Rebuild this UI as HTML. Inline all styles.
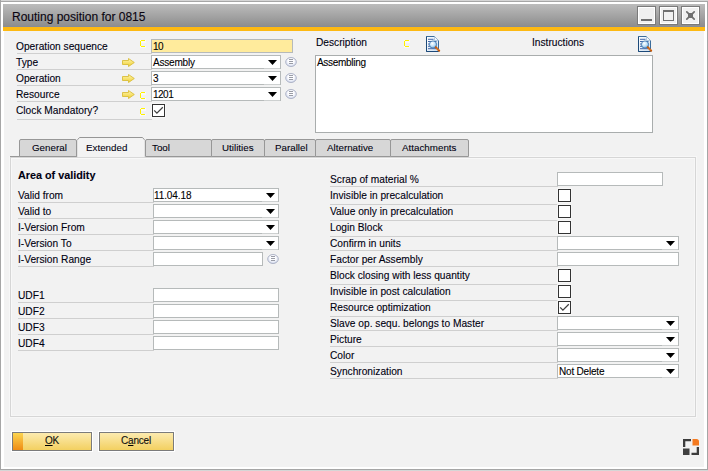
<!DOCTYPE html><html><head><meta charset="utf-8"><style>
html,body{margin:0;padding:0;width:708px;height:471px;overflow:hidden;background:#d6d6d6}
body{position:relative;font-family:"Liberation Sans",sans-serif}
div{position:absolute;box-sizing:content-box}
.lb{font-size:10.2px;line-height:12px;color:#000010;white-space:nowrap;-webkit-text-stroke:0.1px #000010}
.tv{font-size:10px;line-height:12px;letter-spacing:-0.2px;color:#000;white-space:nowrap;-webkit-text-stroke:0.1px #000}
.tb{font-size:9.8px;line-height:12px;color:#000010;white-space:nowrap;-webkit-text-stroke:0.08px #000010}
.in{border:1px solid #b6baba}
</style></head><body>
<div style="position:absolute;left:0px;top:0px;width:1px;height:470px;background:#a6a6a6"></div>
<div style="position:absolute;left:0px;top:1px;width:708px;height:469px;background:#a6a6a6"></div>
<div style="position:absolute;left:1px;top:2px;width:706px;height:467px;background:#ffffff"></div>
<div style="position:absolute;left:4px;top:31px;width:700px;height:436px;background:#f2f2f2"></div>
<div style="position:absolute;left:3px;top:4px;width:702px;height:22px;background:linear-gradient(#bcbcbc,#8e8e8e)"></div>
<div style="position:absolute;left:3px;top:26px;width:702px;height:1px;background:#878c97"></div>
<div style="position:absolute;left:3px;top:27px;width:702px;height:4px;background:#fdb913"></div>
<div style="left:12px;top:10px;font-size:12px;line-height:14px;color:#0a0410;white-space:nowrap;-webkit-text-stroke:0.12px #0a0410">Routing position for 0815</div>
<div style="position:absolute;left:637px;top:6px;width:17px;height:17px;border:1px solid #7a7a7a;background:#f0f0f0;box-shadow:inset 0 0 0 1px #fff"></div>
<div style="position:absolute;left:659px;top:6px;width:17px;height:17px;border:1px solid #7a7a7a;background:#f0f0f0;box-shadow:inset 0 0 0 1px #fff"></div>
<div style="position:absolute;left:681px;top:6px;width:17px;height:17px;border:1px solid #7a7a7a;background:#f0f0f0;box-shadow:inset 0 0 0 1px #fff"></div>
<div style="position:absolute;left:641px;top:19px;width:11px;height:2px;background:#6f6f6f"></div>
<div style="position:absolute;left:663px;top:10px;width:9px;height:8px;border:1px solid #6f6f6f;border-top-width:2px"></div>
<svg style="position:absolute;left:685px;top:10px" width="11" height="11" viewBox="0 0 11 11"><path d="M1.8 1.8L9.2 9.2M9.2 1.8L1.8 9.2" stroke="#6f6f6f" stroke-width="1.7" stroke-linecap="round"/><rect x="3" y="3" width="5" height="5" fill="#6f6f6f"/></svg>
<div class="lb" style="left:16px;top:41px;">Operation sequence</div>
<div class="lb" style="left:16px;top:57px;">Type</div>
<div class="lb" style="left:16px;top:73px;">Operation</div>
<div class="lb" style="left:16px;top:89px;">Resource</div>
<div class="lb" style="left:16px;top:105px;">Clock Mandatory?</div>
<div style="position:absolute;left:17px;top:53px;width:135px;height:1px;background:#cfcfcf"></div>
<div style="position:absolute;left:17px;top:69px;width:135px;height:1px;background:#cfcfcf"></div>
<div style="position:absolute;left:17px;top:85px;width:135px;height:1px;background:#cfcfcf"></div>
<div style="position:absolute;left:17px;top:101px;width:135px;height:1px;background:#cfcfcf"></div>
<div style="position:absolute;left:17px;top:119px;width:135px;height:1px;background:#cfcfcf"></div>
<svg style="position:absolute;left:139px;top:39px" width="7" height="9" shape-rendering="crispEdges"><path d="M1 1h6v3h-5v3h5v2h-6z" fill="#ffffff" opacity="0.5"/><rect x="2" y="1" width="4" height="1" fill="#fff200"/><rect x="1" y="2" width="1" height="5" fill="#fff200"/><rect x="2" y="7" width="4" height="1" fill="#fff200"/></svg>
<div class="in" style="left:151px;top:39px;width:140px;height:12px;background:#ffeb9c"></div>
<div class="tv" style="left:153px;top:41px;letter-spacing:-0.5px;">10</div>
<svg style="position:absolute;left:122px;top:58px" width="13" height="9" viewBox="0 0 13 9"><defs><linearGradient id="ag12258" x1="0" y1="0" x2="0" y2="1"><stop offset="0" stop-color="#fff6b0"/><stop offset="1" stop-color="#f0cf30"/></linearGradient></defs><path d="M0.5 2.5H6.5V0.5L12.3 4.5L6.5 8.5V6.5H0.5Z" fill="url(#ag12258)" stroke="#d9bd3a" stroke-width="0.9"/></svg>
<div class="in" style="left:151px;top:55px;width:128px;height:12px;background:#fff"></div>
<div style="position:absolute;left:264px;top:68px;width:16px;height:1px;background:#cdd0d0"></div>
<svg style="position:absolute;left:268px;top:60px" width="9" height="5"><path d="M0 0H9L4.5 5Z" fill="#000"/></svg>
<div class="tv" style="left:153px;top:57px;">Assembly</div>
<svg style="position:absolute;left:285px;top:57px" width="13" height="11" viewBox="0 0 13 11"><defs><radialGradient id="lg28557" cx="0.5" cy="0.4" r="0.6"><stop offset="0.45" stop-color="#fdfdff"/><stop offset="1" stop-color="#cdd5ea"/></radialGradient></defs><ellipse cx="6" cy="5" rx="5.3" ry="4.5" fill="url(#lg28557)" stroke="#a8aec2" stroke-width="0.9"/><path d="M4 2.5H8M4 4.5H8M4 6.5H8" stroke="#868a96" stroke-width="0.85"/></svg>
<svg style="position:absolute;left:122px;top:74px" width="13" height="9" viewBox="0 0 13 9"><defs><linearGradient id="ag12274" x1="0" y1="0" x2="0" y2="1"><stop offset="0" stop-color="#fff6b0"/><stop offset="1" stop-color="#f0cf30"/></linearGradient></defs><path d="M0.5 2.5H6.5V0.5L12.3 4.5L6.5 8.5V6.5H0.5Z" fill="url(#ag12274)" stroke="#d9bd3a" stroke-width="0.9"/></svg>
<div class="in" style="left:151px;top:71px;width:128px;height:12px;background:#fff"></div>
<div style="position:absolute;left:264px;top:84px;width:16px;height:1px;background:#cdd0d0"></div>
<svg style="position:absolute;left:268px;top:76px" width="9" height="5"><path d="M0 0H9L4.5 5Z" fill="#000"/></svg>
<div class="tv" style="left:153px;top:73px;letter-spacing:-0.5px;">3</div>
<svg style="position:absolute;left:285px;top:73px" width="13" height="11" viewBox="0 0 13 11"><defs><radialGradient id="lg28573" cx="0.5" cy="0.4" r="0.6"><stop offset="0.45" stop-color="#fdfdff"/><stop offset="1" stop-color="#cdd5ea"/></radialGradient></defs><ellipse cx="6" cy="5" rx="5.3" ry="4.5" fill="url(#lg28573)" stroke="#a8aec2" stroke-width="0.9"/><path d="M4 2.5H8M4 4.5H8M4 6.5H8" stroke="#868a96" stroke-width="0.85"/></svg>
<svg style="position:absolute;left:122px;top:90px" width="13" height="9" viewBox="0 0 13 9"><defs><linearGradient id="ag12290" x1="0" y1="0" x2="0" y2="1"><stop offset="0" stop-color="#fff6b0"/><stop offset="1" stop-color="#f0cf30"/></linearGradient></defs><path d="M0.5 2.5H6.5V0.5L12.3 4.5L6.5 8.5V6.5H0.5Z" fill="url(#ag12290)" stroke="#d9bd3a" stroke-width="0.9"/></svg>
<svg style="position:absolute;left:139px;top:91px" width="7" height="9" shape-rendering="crispEdges"><path d="M1 1h6v3h-5v3h5v2h-6z" fill="#ffffff" opacity="0.5"/><rect x="2" y="1" width="4" height="1" fill="#fff200"/><rect x="1" y="2" width="1" height="5" fill="#fff200"/><rect x="2" y="7" width="4" height="1" fill="#fff200"/></svg>
<div class="in" style="left:151px;top:87px;width:128px;height:12px;background:#fff"></div>
<div style="position:absolute;left:264px;top:100px;width:16px;height:1px;background:#cdd0d0"></div>
<svg style="position:absolute;left:268px;top:92px" width="9" height="5"><path d="M0 0H9L4.5 5Z" fill="#000"/></svg>
<div class="tv" style="left:153px;top:89px;letter-spacing:-0.5px;">1201</div>
<svg style="position:absolute;left:285px;top:89px" width="13" height="11" viewBox="0 0 13 11"><defs><radialGradient id="lg28589" cx="0.5" cy="0.4" r="0.6"><stop offset="0.45" stop-color="#fdfdff"/><stop offset="1" stop-color="#cdd5ea"/></radialGradient></defs><ellipse cx="6" cy="5" rx="5.3" ry="4.5" fill="url(#lg28589)" stroke="#a8aec2" stroke-width="0.9"/><path d="M4 2.5H8M4 4.5H8M4 6.5H8" stroke="#868a96" stroke-width="0.85"/></svg>
<svg style="position:absolute;left:139px;top:107px" width="7" height="9" shape-rendering="crispEdges"><path d="M1 1h6v3h-5v3h5v2h-6z" fill="#ffffff" opacity="0.5"/><rect x="2" y="1" width="4" height="1" fill="#fff200"/><rect x="1" y="2" width="1" height="5" fill="#fff200"/><rect x="2" y="7" width="4" height="1" fill="#fff200"/></svg>
<svg style="position:absolute;left:151px;top:103px" width="15" height="15" viewBox="0 0 15 15"><rect x="0" y="0" width="15" height="15" fill="#fafafa" opacity="0.7"/><rect x="1.5" y="1.5" width="12" height="12" fill="#fff" stroke="#333" stroke-width="1"/><path d="M3.2 7.4L5.9 10.1L11.8 4.3" stroke="#404040" stroke-width="1.3" fill="none"/></svg>
<div class="lb" style="left:316px;top:37px;">Description</div>
<svg style="position:absolute;left:403px;top:39px" width="7" height="9" shape-rendering="crispEdges"><path d="M1 1h6v3h-5v3h5v2h-6z" fill="#ffffff" opacity="0.5"/><rect x="2" y="1" width="4" height="1" fill="#fff200"/><rect x="1" y="2" width="1" height="5" fill="#fff200"/><rect x="2" y="7" width="4" height="1" fill="#fff200"/></svg>
<svg style="position:absolute;left:426px;top:36px" width="16" height="17" viewBox="0 0 16 17"><defs><linearGradient id="dg426" x1="0" y1="0" x2="1" y2="1"><stop offset="0" stop-color="#ffffff"/><stop offset="1" stop-color="#cfe0f0"/></linearGradient><radialGradient id="mg426" cx="0.4" cy="0.35" r="0.65"><stop offset="0" stop-color="#ffffff"/><stop offset="0.6" stop-color="#bfe0f8"/><stop offset="1" stop-color="#6aa6d8"/></radialGradient></defs>
<path d="M0.5 0.5H8.5L12.5 4.5V15.5H0.5Z" fill="url(#dg426)" stroke="#3a6c9c" stroke-width="1"/>
<path d="M0.5 0.5V15.5H12.5" fill="none" stroke="#1d4a7a" stroke-width="1"/>
<path d="M8.5 0.5V4.5H12.5" fill="#f4f8fc" stroke="#9ab8d4" stroke-width="0.7"/>
<path d="M2 3.3H7.5M2 5.5H10.5M2 8H10.5M2 10.3H10.5M2 12.7H10" stroke="#2f56a0" stroke-width="0.9"/>
<circle cx="7" cy="8.5" r="3.6" fill="url(#mg426)" stroke="#3c74aa" stroke-width="0.8"/>
<path d="M9.8 11.3L13.2 14.7" stroke="#c85a08" stroke-width="2" stroke-linecap="round"/><path d="M10.4 11.9L12.8 14.3" stroke="#f8c890" stroke-width="0.6" stroke-dasharray="1 1"/>
</svg>
<div class="lb" style="left:532px;top:37px;">Instructions</div>
<svg style="position:absolute;left:638px;top:36px" width="16" height="17" viewBox="0 0 16 17"><defs><linearGradient id="dg638" x1="0" y1="0" x2="1" y2="1"><stop offset="0" stop-color="#ffffff"/><stop offset="1" stop-color="#cfe0f0"/></linearGradient><radialGradient id="mg638" cx="0.4" cy="0.35" r="0.65"><stop offset="0" stop-color="#ffffff"/><stop offset="0.6" stop-color="#bfe0f8"/><stop offset="1" stop-color="#6aa6d8"/></radialGradient></defs>
<path d="M0.5 0.5H8.5L12.5 4.5V15.5H0.5Z" fill="url(#dg638)" stroke="#3a6c9c" stroke-width="1"/>
<path d="M0.5 0.5V15.5H12.5" fill="none" stroke="#1d4a7a" stroke-width="1"/>
<path d="M8.5 0.5V4.5H12.5" fill="#f4f8fc" stroke="#9ab8d4" stroke-width="0.7"/>
<path d="M2 3.3H7.5M2 5.5H10.5M2 8H10.5M2 10.3H10.5M2 12.7H10" stroke="#2f56a0" stroke-width="0.9"/>
<circle cx="7" cy="8.5" r="3.6" fill="url(#mg638)" stroke="#3c74aa" stroke-width="0.8"/>
<path d="M9.8 11.3L13.2 14.7" stroke="#c85a08" stroke-width="2" stroke-linecap="round"/><path d="M10.4 11.9L12.8 14.3" stroke="#f8c890" stroke-width="0.6" stroke-dasharray="1 1"/>
</svg>
<div style="left:315px;top:55px;width:336px;height:76px;border:1px solid #a9adad;background:#fff"></div>
<div class="tv" style="left:317px;top:57px;letter-spacing:-0.3px">Assembling</div>
<div style="left:10px;top:157px;width:684px;height:258px;border:1px solid #d6d6d6;background:#f2f2f2;box-shadow:0 0 0 1px #f7f7f7, inset 1px 1px 0 #f8f8f8, inset -1px -1px 0 #f6f6f6"></div>
<div style="position:absolute;left:10px;top:156px;width:67px;height:1px;background:#979797"></div>
<div style="left:19px;top:139px;width:56px;height:16px;border:1px solid #979797;background:#d7d7d7;border-radius:2px 2px 0 0"></div>
<div class="tb" style="left:32px;top:142px;">General</div>
<div style="left:145px;top:139px;width:65px;height:16px;border:1px solid #979797;background:#d7d7d7;border-radius:2px 2px 0 0"></div>
<div class="tb" style="left:152px;top:142px;">Tool</div>
<div style="left:211px;top:139px;width:52px;height:16px;border:1px solid #979797;background:#d7d7d7;border-radius:2px 2px 0 0"></div>
<div class="tb" style="left:222px;top:142px;">Utilities</div>
<div style="left:264px;top:139px;width:50px;height:16px;border:1px solid #979797;background:#d7d7d7;border-radius:2px 2px 0 0"></div>
<div class="tb" style="left:275px;top:142px;">Parallel</div>
<div style="left:315px;top:139px;width:74px;height:16px;border:1px solid #979797;background:#d7d7d7;border-radius:2px 2px 0 0"></div>
<div class="tb" style="left:327px;top:142px;">Alternative</div>
<div style="left:390px;top:139px;width:77px;height:16px;border:1px solid #979797;background:#d7d7d7;border-radius:2px 2px 0 0"></div>
<div class="tb" style="left:402px;top:142px;">Attachments</div>
<svg style="position:absolute;left:77px;top:137px" width="68" height="20"><path d="M0 2.5L2.5 0H65.5L68 2.5V20H0Z" fill="#f3f3f3"/><path d="M0.5 20V2.5M67.5 20V2.5" stroke="#e2e2e2"/><path d="M0.5 2.8L2.5 0.5H65.5L67.5 2.8" fill="none" stroke="#969696"/></svg>
<div style="position:absolute;left:77px;top:157px;width:68px;height:1px;background:#d8d8d8"></div>
<div class="tb" style="left:86px;top:142px;">Extended</div>
<div class="lb" style="left:18px;top:169px;font-weight:bold;font-size:10.8px">Area of validity</div>
<div class="lb" style="left:18px;top:190px;">Valid from</div>
<div style="position:absolute;left:18px;top:202px;width:136px;height:1px;background:#cfcfcf"></div>
<div class="in" style="left:153px;top:188px;width:124px;height:12px;background:#fff"></div>
<div style="position:absolute;left:262px;top:201px;width:16px;height:1px;background:#cdd0d0"></div>
<svg style="position:absolute;left:266px;top:193px" width="9" height="5"><path d="M0 0H9L4.5 5Z" fill="#000"/></svg>
<div class="tv" style="left:154px;top:190px;font-size:10px;letter-spacing:-0.1px">11.04.18</div>
<div class="lb" style="left:18px;top:206px;">Valid to</div>
<div style="position:absolute;left:18px;top:218px;width:136px;height:1px;background:#cfcfcf"></div>
<div class="in" style="left:153px;top:204px;width:124px;height:12px;background:#fff"></div>
<div style="position:absolute;left:262px;top:217px;width:16px;height:1px;background:#cdd0d0"></div>
<svg style="position:absolute;left:266px;top:209px" width="9" height="5"><path d="M0 0H9L4.5 5Z" fill="#000"/></svg>
<div class="lb" style="left:18px;top:222px;">I-Version From</div>
<div style="position:absolute;left:18px;top:234px;width:136px;height:1px;background:#cfcfcf"></div>
<div class="in" style="left:153px;top:220px;width:124px;height:12px;background:#fff"></div>
<div style="position:absolute;left:262px;top:233px;width:16px;height:1px;background:#cdd0d0"></div>
<svg style="position:absolute;left:266px;top:225px" width="9" height="5"><path d="M0 0H9L4.5 5Z" fill="#000"/></svg>
<div class="lb" style="left:18px;top:238px;">I-Version To</div>
<div style="position:absolute;left:18px;top:250px;width:136px;height:1px;background:#cfcfcf"></div>
<div class="in" style="left:153px;top:236px;width:124px;height:12px;background:#fff"></div>
<div style="position:absolute;left:262px;top:249px;width:16px;height:1px;background:#cdd0d0"></div>
<svg style="position:absolute;left:266px;top:241px" width="9" height="5"><path d="M0 0H9L4.5 5Z" fill="#000"/></svg>
<div class="lb" style="left:18px;top:254px;">I-Version Range</div>
<div style="position:absolute;left:18px;top:266px;width:136px;height:1px;background:#cfcfcf"></div>
<div class="in" style="left:153px;top:252px;width:108px;height:12px;background:#fff"></div>
<svg style="position:absolute;left:267px;top:254px" width="13" height="11" viewBox="0 0 13 11"><defs><radialGradient id="lg267254" cx="0.5" cy="0.4" r="0.6"><stop offset="0.45" stop-color="#fdfdff"/><stop offset="1" stop-color="#cdd5ea"/></radialGradient></defs><ellipse cx="6" cy="5" rx="5.3" ry="4.5" fill="url(#lg267254)" stroke="#a8aec2" stroke-width="0.9"/><path d="M4 2.5H8M4 4.5H8M4 6.5H8" stroke="#868a96" stroke-width="0.85"/></svg>
<div class="lb" style="left:18px;top:290px;">UDF1</div>
<div style="position:absolute;left:18px;top:302px;width:136px;height:1px;background:#cfcfcf"></div>
<div class="in" style="left:153px;top:288px;width:124px;height:12px;background:#fff"></div>
<div class="lb" style="left:18px;top:306px;">UDF2</div>
<div style="position:absolute;left:18px;top:318px;width:136px;height:1px;background:#cfcfcf"></div>
<div class="in" style="left:153px;top:304px;width:124px;height:12px;background:#fff"></div>
<div class="lb" style="left:18px;top:322px;">UDF3</div>
<div style="position:absolute;left:18px;top:334px;width:136px;height:1px;background:#cfcfcf"></div>
<div class="in" style="left:153px;top:320px;width:124px;height:12px;background:#fff"></div>
<div class="lb" style="left:18px;top:338px;">UDF4</div>
<div style="position:absolute;left:18px;top:350px;width:136px;height:1px;background:#cfcfcf"></div>
<div class="in" style="left:153px;top:336px;width:124px;height:12px;background:#fff"></div>
<div class="lb" style="left:330px;top:174px;">Scrap of material %</div>
<div style="position:absolute;left:330px;top:186px;width:228px;height:1px;background:#cfcfcf"></div>
<div class="in" style="left:557px;top:172px;width:104px;height:12px;background:#fff"></div>
<div class="lb" style="left:330px;top:190px;">Invisible in precalculation</div>
<div style="position:absolute;left:330px;top:204px;width:228px;height:1px;background:#cfcfcf"></div>
<svg style="position:absolute;left:557px;top:188px" width="15" height="15" viewBox="0 0 15 15"><rect x="0" y="0" width="15" height="15" fill="#fafafa" opacity="0.7"/><rect x="1.5" y="1.5" width="12" height="12" fill="#fff" stroke="#333" stroke-width="1"/></svg>
<div class="lb" style="left:330px;top:206px;">Value only in precalculation</div>
<div style="position:absolute;left:330px;top:220px;width:228px;height:1px;background:#cfcfcf"></div>
<svg style="position:absolute;left:557px;top:204px" width="15" height="15" viewBox="0 0 15 15"><rect x="0" y="0" width="15" height="15" fill="#fafafa" opacity="0.7"/><rect x="1.5" y="1.5" width="12" height="12" fill="#fff" stroke="#333" stroke-width="1"/></svg>
<div class="lb" style="left:330px;top:222px;">Login Block</div>
<div style="position:absolute;left:330px;top:236px;width:228px;height:1px;background:#cfcfcf"></div>
<svg style="position:absolute;left:557px;top:220px" width="15" height="15" viewBox="0 0 15 15"><rect x="0" y="0" width="15" height="15" fill="#fafafa" opacity="0.7"/><rect x="1.5" y="1.5" width="12" height="12" fill="#fff" stroke="#333" stroke-width="1"/></svg>
<div class="lb" style="left:330px;top:238px;">Confirm in units</div>
<div style="position:absolute;left:330px;top:250px;width:228px;height:1px;background:#cfcfcf"></div>
<div class="in" style="left:557px;top:236px;width:120px;height:12px;background:#fff"></div>
<div style="position:absolute;left:662px;top:249px;width:16px;height:1px;background:#cdd0d0"></div>
<svg style="position:absolute;left:666px;top:241px" width="9" height="5"><path d="M0 0H9L4.5 5Z" fill="#000"/></svg>
<div class="lb" style="left:330px;top:254px;">Factor per Assembly</div>
<div style="position:absolute;left:330px;top:266px;width:228px;height:1px;background:#cfcfcf"></div>
<div class="in" style="left:557px;top:252px;width:120px;height:12px;background:#fff"></div>
<div class="lb" style="left:330px;top:270px;">Block closing with less quantity</div>
<div style="position:absolute;left:330px;top:284px;width:228px;height:1px;background:#cfcfcf"></div>
<svg style="position:absolute;left:557px;top:268px" width="15" height="15" viewBox="0 0 15 15"><rect x="0" y="0" width="15" height="15" fill="#fafafa" opacity="0.7"/><rect x="1.5" y="1.5" width="12" height="12" fill="#fff" stroke="#333" stroke-width="1"/></svg>
<div class="lb" style="left:330px;top:286px;">Invisible in post calculation</div>
<div style="position:absolute;left:330px;top:300px;width:228px;height:1px;background:#cfcfcf"></div>
<svg style="position:absolute;left:557px;top:284px" width="15" height="15" viewBox="0 0 15 15"><rect x="0" y="0" width="15" height="15" fill="#fafafa" opacity="0.7"/><rect x="1.5" y="1.5" width="12" height="12" fill="#fff" stroke="#333" stroke-width="1"/></svg>
<div class="lb" style="left:330px;top:302px;">Resource optimization</div>
<div style="position:absolute;left:330px;top:316px;width:228px;height:1px;background:#cfcfcf"></div>
<svg style="position:absolute;left:557px;top:300px" width="15" height="15" viewBox="0 0 15 15"><rect x="0" y="0" width="15" height="15" fill="#fafafa" opacity="0.7"/><rect x="1.5" y="1.5" width="12" height="12" fill="#fff" stroke="#333" stroke-width="1"/><path d="M3.2 7.4L5.9 10.1L11.8 4.3" stroke="#404040" stroke-width="1.3" fill="none"/></svg>
<div class="lb" style="left:330px;top:318px;">Slave op. sequ. belongs to Master</div>
<div style="position:absolute;left:330px;top:330px;width:228px;height:1px;background:#cfcfcf"></div>
<div class="in" style="left:557px;top:316px;width:120px;height:12px;background:#fff"></div>
<div style="position:absolute;left:662px;top:329px;width:16px;height:1px;background:#cdd0d0"></div>
<svg style="position:absolute;left:666px;top:321px" width="9" height="5"><path d="M0 0H9L4.5 5Z" fill="#000"/></svg>
<div class="lb" style="left:330px;top:334px;">Picture</div>
<div style="position:absolute;left:330px;top:346px;width:228px;height:1px;background:#cfcfcf"></div>
<div class="in" style="left:557px;top:332px;width:120px;height:12px;background:#fff"></div>
<div style="position:absolute;left:662px;top:345px;width:16px;height:1px;background:#cdd0d0"></div>
<svg style="position:absolute;left:666px;top:337px" width="9" height="5"><path d="M0 0H9L4.5 5Z" fill="#000"/></svg>
<div class="lb" style="left:330px;top:350px;">Color</div>
<div style="position:absolute;left:330px;top:362px;width:228px;height:1px;background:#cfcfcf"></div>
<div class="in" style="left:557px;top:348px;width:120px;height:12px;background:#fff"></div>
<div style="position:absolute;left:662px;top:361px;width:16px;height:1px;background:#cdd0d0"></div>
<svg style="position:absolute;left:666px;top:353px" width="9" height="5"><path d="M0 0H9L4.5 5Z" fill="#000"/></svg>
<div class="lb" style="left:330px;top:366px;">Synchronization</div>
<div style="position:absolute;left:330px;top:378px;width:228px;height:1px;background:#cfcfcf"></div>
<div class="in" style="left:557px;top:364px;width:120px;height:12px;background:#fff"></div>
<div style="position:absolute;left:662px;top:377px;width:16px;height:1px;background:#cdd0d0"></div>
<svg style="position:absolute;left:666px;top:369px" width="9" height="5"><path d="M0 0H9L4.5 5Z" fill="#000"/></svg>
<div class="tv" style="left:559px;top:366px;">Not Delete</div>
<div style="left:12px;top:432px;width:78px;height:17px;border:1px solid #7b7b7b;background:linear-gradient(#fcebb0,#f3d060);box-shadow:0 0 0 1px #fff"></div>
<div style="left:13px;top:433px;width:10px;height:17px;background:linear-gradient(#fcd550,#ef8c15)"></div>
<div class="tv" style="left:45px;top:435px;color:#111"><u>O</u>K</div>
<div style="left:99px;top:432px;width:73px;height:17px;border:1px solid #7b7b7b;background:linear-gradient(#fcebb0,#f3d060);box-shadow:0 0 0 1px #fff"></div>
<div class="tv" style="left:121px;top:435px;color:#111">C<u>a</u>ncel</div>
<svg style="position:absolute;left:683px;top:439px" width="17" height="17" viewBox="0 0 17 17">
<path d="M0 0H8V2.3H2.3V8H0Z" fill="#3c3c3c"/>
<path d="M9.5 0H13.5Q16 0 16 2.5V6.5H9.5Z" fill="#f47a20"/>
<rect x="0" y="9.5" width="6.5" height="6.5" fill="#404040"/>
<path d="M16 8V16H8.5V13.7H13.7V8Z" fill="#3c3c3c"/>
</svg>
</body></html>
